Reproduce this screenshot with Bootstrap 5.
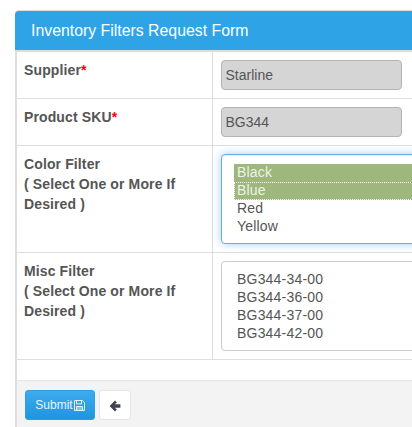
<!DOCTYPE html>
<html lang="en">
<head>
    <meta charset="UTF-8">
    <meta name="viewport" content="width=device-width, initial-scale=1.0">
    <title>Inventory Filters Request Form</title>
    <link href="https://cdn.jsdelivr.net/npm/bootstrap@5.3.0/dist/css/bootstrap.min.css" rel="stylesheet">
    <style>
        html, body {
            overflow: hidden;
            height: 427px;
        }
        body {
            font-family: "Liberation Sans", Arial, sans-serif;
            font-size: 14px;
            line-height: 20px;
            color: #555;
            background-color: #fff;
            padding: 10px 0 0 15px;
        }
        .req-panel {
            width: 430px;
            height: 500px;
            border: 1px solid #ddd;
            border-left-width: 2px;
            border-right: 0;
            border-bottom: 0;
            border-radius: 4px 0 0 0;
        }
        .req-title {
            background-color: #2ea4e7;
            color: #fff;
            font-size: 15.85px;
            line-height: 20px;
            height: 39px;
            padding: 10px 0 0 16px;
            margin-left: -2px;
            border-radius: 4px 0 0 0;
        }
        .req-table {
            width: 100%;
            margin: 0;
            border-collapse: collapse;
            border-top: 2px solid #ddd;
        }
        .req-table td {
            border-bottom: 1px solid #ddd;
            padding: 8px;
            vertical-align: top;
            color: #555;
        }
        .req-table td:first-child {
            width: 195px;
            border-right: 1px solid #ddd;
            padding: 8px 7px;
            font-weight: 700;
            letter-spacing: .12px;
        }
        .req-star {
            color: #f00;
        }
        .req-input {
            width: 181px;
            height: 30px;
            padding: 4px 4px;
            font-size: 14px;
            line-height: 20px;
            color: #555;
            background-color: #d5d5d5;
            border: 1px solid #b4b4b4;
            border-radius: 4px;
        }
        .req-input:disabled {
            background-color: #d5d5d5;
            opacity: 1;
        }
        .req-list {
            width: 215px;
            height: 90px;
            padding: 9px 12px 7px;
            font-size: 14px;
            line-height: 18px;
            letter-spacing: .2px;
            color: #555;
            background: #fff;
            border: 1px solid #ccc;
            border-radius: 4px;
            overflow: hidden;
        }
        .req-list option {
            padding: 0 3.5px;
            min-height: 18px;
            line-height: 18px;
        }
        .req-list-on {
            border-color: #66afe9;
            box-shadow: inset 0 1px 1px rgba(0,0,0,.075), 0 0 8px rgba(102,175,233,.6);
        }
        .req-list option:checked {
            background: linear-gradient(#9db77c, #9db77c);
            color: #eef3e6;
        }
        .req-list option.req-cur {
            outline: 1px dotted #fff;
            outline-offset: -1px;
        }
        .req-foot {
            margin-top: 20px;
            height: 60px;
            background-color: #f3f3f3;
            border-top: 1px solid #e4e4e4;
            padding: 9px 8px;
        }
        .req-submit {
            width: 70px;
            height: 30px;
            padding: 0;
            font-size: 12px;
            color: #e6f4fd;
            background: linear-gradient(#3cacec, #1f94df);
            border: 1px solid #2b9fe3;
            border-radius: 3px;
        }
        .req-submit svg {
            vertical-align: -2px;
            margin-left: 1px;
        }
        .req-back {
            width: 32px;
            height: 30px;
            padding: 0;
            background: #fff;
            border: 1px solid #e6e6e6;
            border-radius: 3px;
        }
    </style>
</head>
<body>
    <div class="req-panel">
        <div class="req-title">Inventory Filters Request Form</div>
        <form>
            <table class="req-table">
                <tr>
                    <td>Supplier<span class="req-star">*</span></td>
                    <td><input class="req-input" type="text" value="Starline" disabled></td>
                </tr>
                <tr>
                    <td>Product SKU<span class="req-star">*</span></td>
                    <td><input class="req-input" type="text" value="BG344" disabled></td>
                </tr>
                <tr>
                    <td>Color Filter<br>( Select One or More If Desired )</td>
                    <td>
                        <select class="req-list req-list-on d-block" multiple size="4">
                            <option selected>Black</option>
                            <option class="req-cur" selected>Blue</option>
                            <option>Red</option>
                            <option>Yellow</option>
                        </select>
                    </td>
                </tr>
                <tr>
                    <td>Misc Filter<br>( Select One or More If Desired )</td>
                    <td>
                        <select class="req-list d-block" multiple size="4">
                            <option>BG344-34-00</option>
                            <option>BG344-36-00</option>
                            <option>BG344-37-00</option>
                            <option>BG344-42-00</option>
                        </select>
                    </td>
                </tr>
            </table>
            <div class="req-foot d-flex gap-1">
                <button type="button" class="req-submit btn">Submit<svg width="11" height="11" viewBox="0 0 11 11" fill="none" stroke="#e6f4fd"><path d="M.5.5h7.8l2.2 2.2v7.8H.5z"/><path d="M2.5.5v3.4h5V.5"/><path d="M2.5 10.5V6.5h6v4"/><path fill="#e6f4fd" fill-opacity=".45" stroke="none" d="M3 7h5v3H3z"/></svg></button>
                <button type="button" class="req-back btn"><svg width="12" height="12" viewBox="0 0 12 12" fill="#3f4650"><path d="M6 .6 7.9 2.5 5.9 4.3H11.4V7.7H5.9L7.9 9.5 6 11.4 .6 6z"/></svg></button>
            </div>
        </form>
    </div>
    <script src="https://cdn.jsdelivr.net/npm/bootstrap@5.3.0/dist/js/bootstrap.bundle.min.js"></script>
</body>
</html>
